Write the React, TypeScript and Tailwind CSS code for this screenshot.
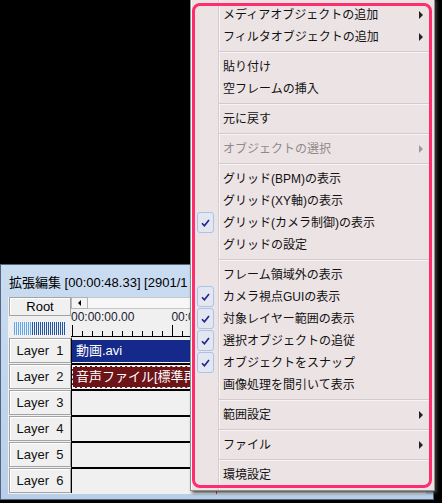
import React from "react";

const FONT = "font-['Liberation_Sans','Noto_Sans_CJK_JP',sans-serif]";

type Item =
  | { sep: true }
  | { label: string; sub?: boolean; disabled?: boolean; checked?: boolean; sep?: false };

const MENU: Item[] = [
  { label: "メディアオブジェクトの追加", sub: true },
  { label: "フィルタオブジェクトの追加", sub: true },
  { sep: true },
  { label: "貼り付け" },
  { label: "空フレームの挿入" },
  { sep: true },
  { label: "元に戻す" },
  { sep: true },
  { label: "オブジェクトの選択", sub: true, disabled: true },
  { sep: true },
  { label: "グリッド(BPM)の表示" },
  { label: "グリッド(XY軸)の表示" },
  { label: "グリッド(カメラ制御)の表示", checked: true },
  { label: "グリッドの設定" },
  { sep: true },
  { label: "フレーム領域外の表示" },
  { label: "カメラ視点GUIの表示", checked: true },
  { label: "対象レイヤー範囲の表示", checked: true },
  { label: "選択オブジェクトの追従", checked: true },
  { label: "オブジェクトをスナップ", checked: true },
  { label: "画像処理を間引いて表示" },
  { sep: true },
  { label: "範囲設定", sub: true },
  { sep: true },
  { label: "ファイル", sub: true },
  { sep: true },
  { label: "環境設定" },
];

const LAYERS = [1, 2, 3, 4, 5, 6];

function Check() {
  return (
    <span className="absolute left-[6px] top-0 flex h-[21px] w-[17px] items-center justify-center rounded-[3px] border border-[#a6c4ec] bg-[#e4e6f0]">
      <svg width="9" height="8" viewBox="0 0 9 8">
        <path d="M1 4.2 L3.4 6.8 L8 1" fill="none" stroke="#1d2590" strokeWidth="1.6" />
      </svg>
    </span>
  );
}

function ContextMenu() {
  return (
    <div className="absolute left-[190px] top-[-2px] h-[493px] w-[245px] border border-[#8f8f8f] bg-[#ece3e5] shadow-[inset_1px_1px_0_#fafafa,2px_2px_3px_rgba(60,60,60,0.9)]">
      <div className="absolute bottom-0 left-[27px] top-0 w-px bg-[#d6cdd0]" />
      <div className="absolute bottom-0 left-[28px] top-0 w-px bg-[#f8f4f5]" />
      <div className="relative flex flex-col pt-[5px]">
        {MENU.map((it, i) =>
          it.sep ? (
            <div key={i} className="relative h-[8px]">
              <div className="absolute left-[28px] right-[2px] top-[3px] h-px bg-[#d3cacd]" />
              <div className="absolute left-[28px] right-[2px] top-[4px] h-px bg-[#f8f4f5]" />
            </div>
          ) : (
            <div key={i} className="relative flex h-[22px] items-center">
              {it.checked && <Check />}
              <span
                className={`pl-[32px] text-[12px] leading-[22px] ${
                  it.disabled ? "text-[#8e8a8b]" : "text-[#111]"
                }`}
              >
                {it.label}
              </span>
              {it.sub && (
                <span
                  className={`absolute left-[228px] top-[7px] h-0 w-0 border-y-[4px] border-l-[4px] border-y-transparent ${
                    it.disabled ? "border-l-[#9a9a9a]" : "border-l-[#222]"
                  }`}
                />
              )}
            </div>
          )
        )}
      </div>
    </div>
  );
}

function Meter() {
  return (
    <div className="ml-[6px] mt-[6px] flex h-[13px] w-[51px] gap-px">
      {Array.from({ length: 26 }).map((_, i) => (
        <span key={i} className={`w-px ${i < 9 ? "bg-[#62a6ee]" : "bg-[#2454a8]"}`} />
      ))}
    </div>
  );
}

function Ruler() {
  const ticks = Array.from({ length: 36 }, (_, i) => i);
  return (
    <svg width="360" height="13" className="block">
      {ticks.map((i) => {
        const x = 1.5 + i * 10;
        const long = i % 10 === 0;
        return <line key={i} x1={x} x2={x} y1={long ? 1 : 7} y2={12} stroke="#000" strokeWidth="1" />;
      })}
      <line x1="0" x2="360" y1="12.5" y2="12.5" stroke="#000" strokeWidth="1" />
    </svg>
  );
}

function Timeline() {
  return (
    <div className="absolute left-0 top-[264px] flex h-[236px] w-[434px] flex-col border border-[#51667f] bg-gradient-to-b from-[#cadcf1] to-[#b9cfe9]">
      <div className="flex h-[32px] items-center pl-[8px] pt-[4px] text-[13px] text-[#000] whitespace-pre">
        拡張編集 [00:00:48.33] [2901/1
      </div>
      <div className="mx-[7px] flex flex-1 overflow-hidden bg-[#f0f0f0]">
        <div className="flex w-[65px] flex-col">
          <div className="ml-[1px] flex h-[19px] w-[62px] items-center justify-center border border-[#a3a3a3] text-[13px] shadow-[inset_1px_1px_0_#fff]">
            Root
          </div>
          <Meter />
          <div className="mt-[3px] flex flex-col gap-px">
            {LAYERS.map((n) => (
              <div
                key={n}
                className="ml-[1px] flex h-[25px] w-[62px] items-center justify-center whitespace-pre border border-[#a3a3a3] text-[13px] text-[#111] shadow-[inset_1px_1px_0_#fff]"
              >
                {`Layer  ${n}`}
              </div>
            ))}
          </div>
        </div>
        <div className="relative flex flex-1 flex-col">
          <div className="flex h-[12px]">
            <div className="flex w-[17px] items-center justify-center border border-[#b4b4b4] bg-[#f4f4f4]">
              <span className="h-0 w-0 border-y-[3px] border-r-[3px] border-y-transparent border-r-black" />
            </div>
            <div className="flex-1 border-y border-[#c8c8c8] bg-[#f7f7f7]" />
          </div>
          <div className="flex h-[15px] items-center text-[12px] text-[#1c1c30]">
            <span>00:00:00.00</span>
            <span className="ml-[37px]">00:00:01.00</span>
          </div>
          <Ruler />
          {LAYERS.map((n) => (
            <div
              key={n}
              className={`h-[26px] border-l border-t-2 border-l-black ${n === 1 ? "border-t-[#f0f0f0]" : "border-t-black"}`}
            >
              {n === 1 && (
                <div className="mt-[1px] flex h-[22px] items-center bg-[#15298a] pl-[4px] text-[13px] text-white whitespace-nowrap">
                  動画.avi
                </div>
              )}
              {n === 2 && (
                <div className="mt-[1px] flex h-[22px] items-center border border-dashed border-white bg-[#6c1418] pl-[3px] text-[13px] text-white whitespace-nowrap">
                  音声ファイル[標準再生]
                </div>
              )}
            </div>
          ))}
          <div className="absolute bottom-0 left-[145px] top-[12px] w-px bg-[#e0202a]" />
        </div>
      </div>
      <div className="h-[5px]" />
    </div>
  );
}

export default function App() {
  return (
    <div className={`relative h-[503px] w-[442px] overflow-hidden bg-black ${FONT}`}>
      <Timeline />
      <ContextMenu />
      <div className="pointer-events-none absolute left-[192px] top-[3px] h-[485px] w-[240px] rounded-[8px] border-[3px] border-[#ff2d6e]" />
    </div>
  );
}
